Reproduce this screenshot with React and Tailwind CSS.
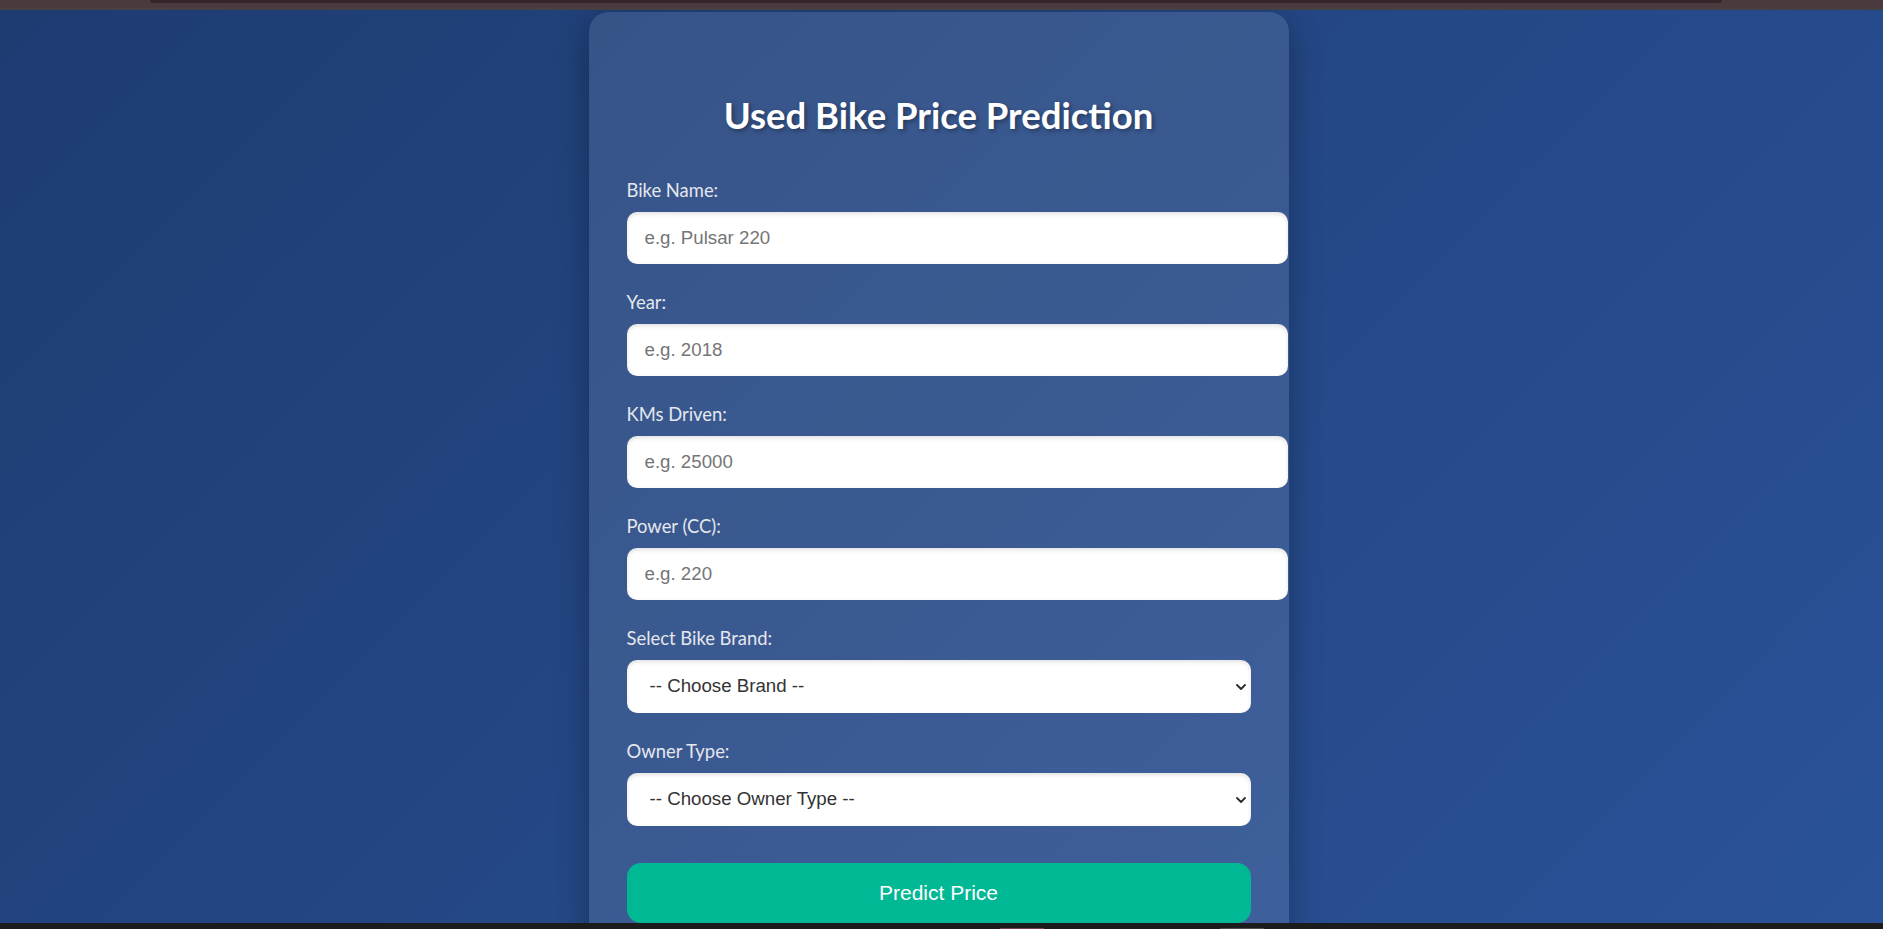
import React from 'react';

const fields = [
  { id: 'bike_name', label: 'Bike Name:', placeholder: 'e.g. Pulsar 220' },
  { id: 'year', label: 'Year:', placeholder: 'e.g. 2018' },
  { id: 'kms_driven', label: 'KMs Driven:', placeholder: 'e.g. 25000' },
  { id: 'power', label: 'Power (CC):', placeholder: 'e.g. 220' },
];

const selects = [
  { id: 'brand', label: 'Select Bike Brand:', placeholder: '-- Choose Brand --' },
  { id: 'owner', label: 'Owner Type:', placeholder: '-- Choose Owner Type --' },
];

const Chevron = () => (
  <svg
    className="pointer-events-none absolute right-[5px] top-1/2 -translate-y-1/2"
    width="10"
    height="7"
    viewBox="0 0 10 7"
    fill="none"
  >
    <path d="M1 1.5 L5 5.5 L9 1.5" stroke="#2b2b2b" strokeWidth="1.8" strokeLinecap="round" strokeLinejoin="round" />
  </svg>
);

const App = () => {
  return (
    <div className="flex h-[929px] flex-col overflow-hidden">
      {/* window top strip */}
      <div className="relative h-[10px] shrink-0 border-b-2 border-[#474040] bg-[#4a3a3d]">
        <div className="ml-[150px] h-[3px] w-[1572px] rounded-b-[4px] bg-[#33252a]" />
      </div>

      {/* page */}
      <div className="flex flex-1 justify-center overflow-hidden bg-[linear-gradient(135deg,#1e3c72,#2a5298)] pt-[2px] pr-[6px]">
        <div className="h-fit w-[700px] rounded-t-[20px] bg-white/10 px-[38px] pt-[81px] pb-[40px] shadow-[0_8px_32px_rgba(0,0,0,0.3)] font-['Lato',sans-serif]">
          <h1 className="mb-[41px] text-center text-[36.5px] font-bold leading-[44px] text-white [text-shadow:2px_2px_4px_rgba(0,0,0,0.35)]">
            Used Bike Price Prediction
          </h1>

          <form onSubmit={(e) => e.preventDefault()}>
            {fields.map((f) => (
              <div key={f.id} className="mb-[26px]">
                <label htmlFor={f.id} className="mb-[10px] block text-[18.4px] leading-[24px] text-[#e4e7ee]">
                  {f.label}
                </label>
                <input
                  id={f.id}
                  type="text"
                  placeholder={f.placeholder}
                  className="block h-[52px] w-[661px] rounded-[10px] bg-white pl-[18px] font-['Liberation_Sans',Arial,sans-serif] text-[18.7px] text-[#222] shadow-[inset_0_2px_4px_rgba(0,0,0,0.12)] outline-none placeholder:text-[#757575]"
                />
              </div>
            ))}

            {selects.map((s) => (
              <div key={s.id} className="mb-[26px]">
                <label htmlFor={s.id} className="mb-[10px] block text-[18.4px] leading-[24px] text-[#e4e7ee]">
                  {s.label}
                </label>
                <div className="relative w-[624px]">
                  <select
                    id={s.id}
                    defaultValue=""
                    className="block h-[53px] w-full appearance-none rounded-[10px] bg-white pl-[23px] font-['Liberation_Sans',Arial,sans-serif] text-[18.7px] text-[#333] shadow-[inset_0_2px_4px_rgba(0,0,0,0.12)] outline-none"
                  >
                    <option value="">{s.placeholder}</option>
                  </select>
                  <Chevron />
                </div>
              </div>
            ))}

            <button
              type="submit"
              className="mt-[37px] block h-[60px] w-[624px] rounded-[14px] bg-[#00b894] font-['Liberation_Sans',Arial,sans-serif] text-[21px] text-white"
            >
              Predict Price
            </button>
          </form>
        </div>
      </div>

      {/* taskbar sliver */}
      <div className="flex h-[6px] shrink-0 items-end bg-[#1c1c1c]">
        <div className="ml-[1000px] h-[1px] w-[44px] bg-[#7a3c48]" />
        <div className="ml-[176px] h-[1px] w-[44px] bg-[#4a4a4a]" />
      </div>
    </div>
  );
};

export default App;
